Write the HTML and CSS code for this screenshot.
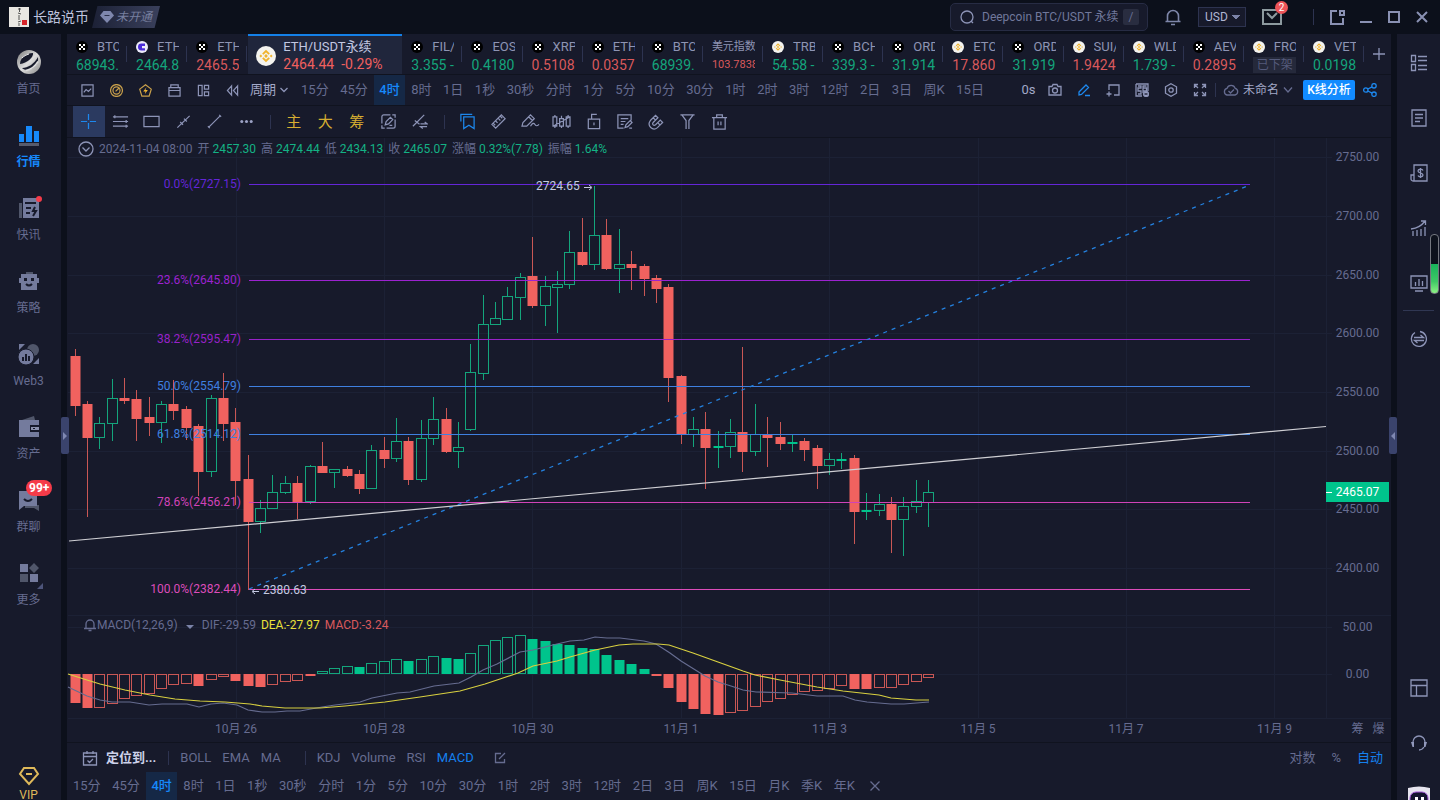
FILE: index.html
```html
<!DOCTYPE html>
<html lang="zh-CN">
<head>
<meta charset="utf-8">
<title>ETH/USDT永续</title>
<link rel="stylesheet" href="styles.css">
</head>
<body>
<svg class="defs" aria-hidden="true">
  <symbol id="okx" viewBox="0 0 12 12"><circle cx="6" cy="6" r="6" fill="#000"/><path d="M3 3h2v2H3zM7 3h2v2H7zM5 5h2v2H5zM3 7h2v2H3zM7 7h2v2H7z" fill="#fff"/></symbol>
  <symbol id="dc" viewBox="0 0 12 12"><circle cx="6" cy="6" r="6" fill="#ecebfa"/><path d="M9 2.600H5.400a3.400 3.400 0 1 0 0 6.800H9V7.200H6V5h3z" fill="#4a2bd8"/></symbol>
  <symbol id="bnb" viewBox="0 0 20 20"><circle cx="10" cy="10" r="10" fill="#f4f3ef"/><g fill="none" stroke="#f0b32d" stroke-width="1.8"><path d="M6.800 8.200 10 5l3.200 3.200M6.800 11.800 10 15l3.200-3.200"/></g><path d="m10 8.100 1.900 1.900L10 11.900 8.100 10zM4.800 8.600 6.200 10l-1.400 1.400L3.400 10zM15.200 8.600l1.400 1.400-1.400 1.400-1.400-1.400z" fill="#f0b32d"/></symbol>
</svg>

<div class="app">
  <header class="titlebar">
    <div class="account">
      <svg class="avatar" viewBox="0 0 20 20"><path fill="#e9e7e2" d="M0 0h20v20H0z"/><path d="M9 2h3M10.500 1v4M9 6l3 1M10 8v3M9 12h2M9 15l3-1M10 16v3" stroke="#444" stroke-width=".9"/><path fill="#d8262b" d="M13 13h5v5h-5z"/></svg>
      <span class="user">长路说币</span>
      <button class="vip-state"><svg viewBox="0 0 14 14" width="14" height="14"><path fill="#7e87ad" d="M3.500 1h7L14 5.500 7 13 0 5.500z"/><path stroke="#2b304a" d="M4.500 5.500h5"/></svg>未开通</button>
    </div>
    <div class="title-tools">
      <label class="search">
        <svg viewBox="0 0 16 16" width="16" height="16" class="ic"><circle cx="8" cy="8" r="6"/><path d="m12 12 2 2"/></svg>
        <input type="text" placeholder="Deepcoin BTC/USDT 永续" aria-label="搜索"><kbd>/</kbd>
      </label>
      <button class="bell" aria-label="通知"><svg class="ic" viewBox="0 0 18 18" width="18" height="18"><path d="M3.500 13V8a5.500 5.500 0 0 1 11 0v5M1.500 13.500h15M7 16.500h4"/></svg></button>
      <select class="currency" aria-label="计价货币"><option>USD</option></select>
      <button class="mail" aria-label="消息"><svg viewBox="0 0 20 16" width="20" height="16" fill="none" stroke="#8d9a9f" stroke-width="2"><path d="M1 1h18v14H1zM5 4l5 5 5-5"/></svg><span class="badge">2</span></button>
      <i class="vsep"></i>
      <div class="window-tools">
        <button aria-label="新窗口"><svg class="ic thick" viewBox="0 0 16 16" width="16" height="16"><path d="M8 2H2v13h12V9M11 2h4v4h-4z"/></svg></button>
        <button aria-label="最小化"><svg class="ic thick" viewBox="0 0 14 16" width="14" height="16"><path d="M1 13h12"/></svg></button>
        <button aria-label="最大化"><svg class="ic thick" viewBox="0 0 14 16" width="14" height="16"><path d="M2 3h10v10H2z"/></svg></button>
        <button aria-label="关闭"><svg class="ic thick" viewBox="0 0 14 16" width="14" height="16"><path d="m2 3 10 10M12 3 2 13"/></svg></button>
      </div>
    </div>
  </header>

  <div class="workspace">
    <nav class="sidebar">
      <a href="#"><svg viewBox="0 0 24 24"><defs><linearGradient id="metal" x2="1" y2="1"><stop stop-color="#777"/><stop offset=".5" stop-color="#ddd"/><stop offset="1" stop-color="#888"/></linearGradient></defs><circle cx="12" cy="12" r="12" fill="url(#metal)"/><path d="M3 14C3 8 9 3 16 3c1 4-6 10-13 11z" fill="#171a2b"/><path d="M5 18c6 0 12-4 16-11 1 7-4 12-10 13-3 0-5-1-6-2z" fill="#171a2b"/><path d="M9 20.500c5-1 9-4 12-9" stroke="#ddd" stroke-width="1.500" fill="none"/><path d="M5 8c2-2 4-3 7-4" stroke="#eee" fill="none"/></svg>首页</a>
      <a href="#" class="on"><svg viewBox="0 0 24 24"><path d="M2 11h5v8H2zM9 3h6v16H9zM17 8h5v11h-5z" fill="#1689fb"/><path d="M2 20h20v3H2z" fill="#575b6c"/></svg>行情</a>
      <a href="#"><svg viewBox="0 0 24 24"><path d="M2 7h3v15H2z" fill="#50566a"/><path d="M6 2h16v20H6z" fill="#747b9d"/><path d="M8 7h11M9 12h5M9 17h4M18 11l-2 4h3l-3 5" stroke="#171a2b" stroke-width="2" fill="none"/></svg><i class="dot"></i>快讯</a>
      <a href="#"><svg viewBox="0 0 24 24"><path d="M9 3h7v2H9z" fill="#50566a"/><path d="M4 5h16v4h2v5h-2v7H4v-7H2V9h2z" fill="#747b9d"/><path d="M7 9h3v3H7zM14 9h3v3h-3z" fill="#171a2b"/><path d="M9 15q3 3 6 0" stroke="#171a2b" stroke-width="2" fill="none"/></svg>策略</a>
      <a href="#"><svg viewBox="0 0 24 24"><circle cx="16" cy="8" r="6" fill="#50566a"/><circle cx="9" cy="15" r="8" fill="#747b9d" stroke="#171a2b"/><path d="M2 2h6L2 8zM22 22h-6l6-6z" fill="#747b9d"/><path d="M6 15v4M9 12v7M12 14v5" stroke="#171a2b" stroke-width="2"/></svg>Web3</a>
      <a href="#"><svg viewBox="0 0 24 24"><path d="m5 5 12-4 1 4z" fill="#50566a"/><path d="M2 5h20v17H2z" fill="#747b9d"/><path d="M13 10h9v7h-9z" fill="#171a2b"/><path d="M14 12h8v3h-8z" fill="#8b91ad"/><path d="M16 13h2v1h-2z" fill="#171a2b"/></svg>资产</a>
      <a href="#"><svg viewBox="0 0 24 24"><path d="M8 17h14v6l-5-3H8z" fill="#50566a"/><path d="M2 3h18v15H7l-5 4z" fill="#747b9d"/><path d="M7 11q4 4 8 0" stroke="#171a2b" stroke-width="2" fill="none"/></svg><span class="count">99+</span>群聊</a>
      <a href="#"><svg viewBox="0 0 24 24"><path d="M3 3h8v8H3zM13 13h8v8h-8z" fill="#747b9d"/><path d="M3 13h8v8H3zM17 2l5 5-5 5-5-5z" fill="#50566a"/></svg>更多<i class="corner"></i></a>
      <a href="#" class="vip"><svg viewBox="0 0 24 24" fill="none" stroke="#dfb95a" stroke-width="2"><path d="M7 4h10l4 6-9 10L3 10zM9 10h6"/></svg>VIP</a>
    </nav>

    <main class="main">
      <div class="tabs" id="tabs"></div>

      <div class="bar period-bar">
        <div class="tool-set">
          <button aria-label="图表"><svg class="ic" viewBox="0 0 14 14"><path d="M1 1h12v12H1zM3 9l2.500-3 2.500 2 3-3"/></svg></button>
          <button aria-label="时间"><svg class="ic gold" viewBox="0 0 14 14"><circle cx="7" cy="7" r="6.400"/><circle cx="7" cy="7" r="3.800"/><path d="m6 8 4-4"/></svg></button>
          <button aria-label="闪电"><svg class="ic gold" viewBox="0 0 14 14"><path d="m7 .8 6.200 4.700-2.300 7.500H3.100L.8 5.500z"/><path d="M8 3.500 4.500 8H7l-.8 3L9.500 6.500H7z" fill="#f2b632" stroke="none"/></svg></button>
          <button aria-label="工具箱"><svg class="ic" viewBox="0 0 14 14"><path d="M1 4h12v9H1zM3 4V1h8v3M1 7h12"/></svg></button>
          <button aria-label="布局"><svg class="ic" viewBox="0 0 14 14"><path d="M1.500 1.500h4v11h-4zM8 1.500h4.500v4H8zM8 8.500h4.500v4H8z"/></svg></button>
          <button aria-label="后退"><svg class="ic" viewBox="0 0 14 14"><path d="M6 2 1.500 7 6 12zM12.500 2 8 7l4.500 5z"/></svg></button>
        </div>
        <button class="period-menu">周期<svg class="ic" viewBox="0 0 8 6"><path d="m.5 1 3.500 3.500L7.500 1"/></svg></button>
        <div class="periods top" id="periodsTop"></div>
        <div class="chart-tools">
          <button class="zero">0s</button>
          <button aria-label="截图"><svg class="ic" viewBox="0 0 14 14"><path d="M1 3.500h3l1-2h4l1 2h3V12H1z"/><circle cx="7" cy="7.500" r="2.500"/></svg></button>
          <button aria-label="画图"><svg class="ic blue" viewBox="0 0 14 14"><path d="m2 9 7-7 2.500 2.500-7 7L2 12zM8 12.500h5"/></svg></button>
          <button aria-label="添加"><svg class="ic" viewBox="0 0 14 14"><path d="M3 7V2h10v10H8M3 8.500v5M.5 11h5"/></svg></button>
          <button aria-label="弹幕"><svg class="ic" viewBox="0 0 14 14"><path d="M1 1h12v7M7 13H1V1M3 3h3v2H3v3h3v3H3M8 3v7M7.500 5h4v3h-4M7.500 3h4"/><circle cx="11" cy="11" r="2.500" fill="#9ca3ca"/><path stroke="#171a2b" d="M9.500 11h3"/></svg></button>
          <button aria-label="设置"><svg class="ic" viewBox="0 0 14 14"><path d="m7 .7 5.500 3.100v6.400L7 13.300l-5.500-3.100V3.800z"/><circle cx="7" cy="7" r="2.200"/></svg></button>
          <button aria-label="全屏"><svg class="ic" viewBox="0 0 14 14"><path d="M1.500 5V1.500H5M2 2l3 3M9 1.500h3.500V5M12 2 9 5M1.500 9v3.500H5M2 12l3-3M9 12.500h3.500V9M12 12 9 9"/></svg></button>
        </div>
        <i class="vsep"></i>
        <button class="unnamed"><svg class="ic dim" viewBox="0 0 16 14" width="16" height="14"><path d="M4 12a3.400 3.400 0 0 1 0-6.600 4.300 4.300 0 0 1 8.200 0A3.400 3.400 0 0 1 12 12zM5.500 8l2 2 3.500-3.500"/></svg>未命名<svg class="ic dim" viewBox="0 0 10 6" width="10" height="6"><path d="m1 .5 4 4.500L9 .5"/></svg></button>
        <button class="analyse">K线分析</button>
        <button class="share" aria-label="分享"><svg class="ic blue" viewBox="0 0 14 14" width="14" height="14"><circle cx="2.800" cy="7" r="2.200"/><circle cx="11" cy="2.800" r="2.200"/><circle cx="11" cy="11.200" r="2.200"/><path d="m4.800 6 4.300-2.200M4.800 8l4.300 2.200"/></svg></button>
      </div>

      <div class="bar draw-bar">
        <div class="draw-tools">
          <button class="on" aria-label="十字线"><svg class="ic blue" viewBox="0 0 18 18"><path d="M9 1v6.500M9 10.500V17M1 9h6.500M10.500 9H17"/></svg></button>
          <button aria-label="水平线"><svg class="ic" viewBox="0 0 18 18"><path d="M1 4h16M1 9h16M1 14h16M3 2.500v3M15 7.500v3M15 12.500v3"/></svg></button>
          <button aria-label="矩形"><svg class="ic" viewBox="0 0 18 18"><path d="M1 3.500h16v11H1z"/></svg></button>
          <button aria-label="直线"><svg class="ic" viewBox="0 0 18 18"><path d="M2.500 15.500 15.500 3M5.500 9.500l3 3M9.500 6l3 3"/></svg></button>
          <button aria-label="线段"><svg class="ic" viewBox="0 0 18 18"><path d="M3 15 15 3M2 14l2 2M14 2l2 2"/></svg></button>
          <button aria-label="更多工具"><svg viewBox="0 0 18 18" fill="#9ba1c4"><circle cx="4" cy="9" r="1.600"/><circle cx="9" cy="9" r="1.600"/><circle cx="14" cy="9" r="1.600"/></svg></button>
          <i class="vsep"></i>
          <button class="gold-text">主</button><button class="gold-text">大</button><button class="gold-text">筹</button>
          <button aria-label="切换"><svg class="ic" viewBox="0 0 18 18"><path d="M11 2H4a2 2 0 0 0-2 2v7M7 16h7a2 2 0 0 0 2-2V7M13 2h3v3M2 13v3h3M5.500 12.500l1-3.500L11 4.500 13.500 7 9 11.500zM10 13h3"/></svg></button>
          <button aria-label="换线"><svg class="ic" viewBox="0 0 18 18"><path d="M2 14 14 2M4 8l5 4M10 11.500h7l-2.500-2M17 14.500h-7l2.500 2"/></svg></button>
          <i class="vsep"></i>
          <button aria-label="书签"><svg class="ic blue" viewBox="0 0 18 18"><path d="M5 4h11v12.500L10.500 13 5 16.500zM2 9V1.500h12"/></svg></button>
          <button aria-label="尺子"><svg class="ic" viewBox="0 0 18 18"><path d="M2 12 12 2l4 4L6 16zM6 8.500l2 2M9 6l2 2M3.500 11l2 2M11 3.500l2 2"/></svg></button>
          <button aria-label="画笔"><svg class="ic wide" viewBox="0 0 20 18"><path d="M1 14 2 10l8-8 4 4-8 8zM8 4l4 4M10 14q3-5 4.500-2t4.500 0"/></svg></button>
          <button aria-label="K线"><svg class="ic wide" viewBox="0 0 20 18"><path d="M1 4h4v10H1zM8 6h4v8H8zM15 4h4v10h-4zM3 2v2M3 14v2M10 3v3M10 14v2M17 2v2M17 14v2M1 14 19 4"/></svg></button>
          <button aria-label="锁定"><svg class="ic" viewBox="0 0 18 18"><path d="M3.500 6.500h12v10h-12zM7 6.500v-5h5.500M9.500 10v3"/></svg></button>
          <button aria-label="笔记"><svg class="ic" viewBox="0 0 18 18"><path d="M16 8V2H2v14h6M5 6h8M5 9h5M5 12h3M9.500 15.500l1-3L15 8l2 2-4.500 4.500zM14 16h3"/></svg></button>
          <button aria-label="磁铁"><svg class="ic" viewBox="0 0 18 18"><path d="M2.500 8 8 2.500 10.500 5 5.500 10c-1.500 2 .5 4 2.500 2.500l5-5 2.500 2.500-5.500 5.500c-5 4-11.500-2-7.500-7.500zM5.500 5 8 7.500M13 13l-2.500-2.500"/></svg></button>
          <button aria-label="筛选"><svg class="ic" viewBox="0 0 18 18"><path d="M1.500 2h15M3 2l4.500 6v9M15 2l-4.500 6v9"/></svg></button>
          <button aria-label="删除"><svg class="ic" viewBox="0 0 18 18"><path d="M1 5h16M6 5V2h6v3M3 5v12h12V5M7.500 9v4M10.500 9v4"/></svg></button>
        </div>
      </div>

      <section class="chart">
        <svg id="plot" viewBox="67 138 1324 604" role="img" aria-label="ETH/USDT 4时 K线图"></svg>
        <div class="quote">
          <svg class="ic" viewBox="0 0 16 16" width="16" height="16"><circle cx="8" cy="8" r="7"/><path d="m4.500 6.500 3.500 3.500 3.500-3.500"/></svg>
          <span>2024-11-04 08:00</span>
          <span>开 <b>2457.30</b></span><span>高 <b>2474.44</b></span><span>低 <b>2434.13</b></span><span>收 <b>2465.07</b></span><span>涨幅 <b>0.32%(7.78)</b></span><span>振幅 <b>1.64%</b></span>
        </div>
        <div class="legend">
          <svg class="ic dim" viewBox="0 0 14 14" width="14" height="14"><path d="M3 10V6a4 4 0 0 1 8 0v4M1 10.500h12M5.500 12.500h3"/></svg>
          <span>MACD(12,26,9)</span><i class="caret"></i><span>DIF:-29.59</span><span class="dea">DEA:-27.97</span><span class="red">MACD:-3.24</span>
        </div>
      </section>

      <div class="bar indicators">
        <button class="locate"><svg class="ic" viewBox="0 0 16 16" width="16" height="16"><path d="M1.500 3h13v12h-13zM1.500 6.500h13M5 1v3M11 1v3M5.500 10.500l2 2 3.500-3.500"/></svg>定位到...</button>
        <i class="vsep"></i>
        <div class="ind-group"><button>BOLL</button><button>EMA</button><button>MA</button></div>
        <i class="vsep"></i>
        <div class="ind-group"><button>KDJ</button><button>Volume</button><button>RSI</button><button class="blue">MACD</button></div>
        <button class="edit" aria-label="编辑指标"><svg class="ic dim" viewBox="0 0 12 12" width="12" height="12"><path d="M7 1.500H1.500v9h9V7M5 7l6-6"/></svg></button>
        <div class="scale"><button>对数</button><button>%</button><button class="blue">自动</button></div>
      </div>
      <div class="bar period-foot">
        <div class="periods foot" id="periodsFoot"></div>
        <button class="close" aria-label="关闭周期栏"><svg class="ic dim" viewBox="0 0 10 10" width="10" height="10"><path d="m.5.5 9 9M9.500.5l-9 9"/></svg></button>
      </div>
      <button class="handle left" aria-label="展开左栏"></button>
      <button class="handle right" aria-label="展开右栏"></button>
    </main>

    <aside class="rail">
      <button aria-label="列表"><svg class="ic" viewBox="0 0 18 18"><path d="M1.500 1.500h4v6h-4zM1.500 10.500h4v6h-4zM8 2.500h9M8 6.500h9M8 11.500h9M8 15.500h9"/></svg></button>
      <button aria-label="文档"><svg class="ic" viewBox="0 0 18 18"><path d="M2 1h14v16H2zM5 5.500h8M5 9h8M5 12.500h5"/></svg></button>
      <button aria-label="账单"><svg class="ic" viewBox="0 0 18 18"><path d="M4 1h13v16H3a2 2 0 0 1-2-2v-4h3zM4 11v6M13 6.500c-1-2-5-1.500-5 .5 0 2.500 5 1.500 5 4 0 2-4 2.500-5 .5M10.500 4v10"/></svg></button>
      <button aria-label="走势"><svg class="ic" viewBox="0 0 18 18"><path d="M3 17v-5M7 17v-6M11 17V10M15 17V8M1 10Q10 9 15 2M11 2h4.500v4"/></svg></button>
      <button aria-label="看板"><svg class="ic" viewBox="0 0 18 18"><path d="M1 2h16v12H1zM5 17h8M5.500 8v4M9 5v7M12.500 7v5"/></svg></button>
      <i class="hsep"></i>
      <button aria-label="兑换"><svg class="ic" viewBox="0 0 18 18"><path d="M5 2.500A7.500 7.500 0 1 0 10 1.500M4 7.500h9.500l-3-2.500M14 10.500H4.500l3 2.500"/></svg></button>
      <span class="grow"></span>
      <button aria-label="面板"><svg class="ic" viewBox="0 0 18 18"><path d="M1 1h16v16H1zM1 6.500h16M6.500 6.500V17"/></svg></button>
      <button aria-label="客服"><svg class="ic" viewBox="0 0 18 18"><path d="M3 10V8a6 6 0 0 1 12 0v2M14 13q-2 3-5 3"/><path d="M1 8h3v5H2.500zM17 8h-3v5h1.500z" fill="#9299bc" stroke="none"/></svg></button>
      <button class="bot" aria-label="助手"><svg viewBox="0 0 24 24"><path d="M1 2q11-3 22 0v16H1z" fill="#e6e4ee"/><rect x="3" y="6" width="18" height="14" rx="6" fill="#14152e" stroke="#a45bd8"/><path d="M8 11h3v5H8zM14 11h3v5h-3z" fill="#fff"/></svg></button>
      <span class="gauge"></span>
    </aside>
  </div>
</div>
<script src="app.js"></script>
</body>
</html>
```
FILE: styles.css
```css
* { box-sizing: border-box; }
body { margin: 0; background: #0c101b; color: #666c90; font: 13px/16px Roboto, "Noto Sans CJK SC", sans-serif; overflow: hidden; }
button, input, select { font: inherit; color: inherit; background: none; border: 0; padding: 0; margin: 0; }
button { display: flex; align-items: center; justify-content: center; white-space: nowrap; }
a { color: inherit; text-decoration: none; }
svg { display: block; flex: none; }
.defs { position: absolute; width: 0; height: 0; }
.ic { fill: none; stroke: #8d94b7; stroke-width: 1.3; }
.ic.thick { stroke: #8a91b3; stroke-width: 2; }
.ic.gold { stroke: #c9a04b; }
.ic.blue { stroke: #1d88ee; }
.ic.dim { stroke: #666c90; }
.blue { color: #1580ee; }
.red { color: #d9595c; }
.green { color: #14a57c; }
.vsep { width: 1px; height: 14px; background: #2d3350; flex: none; }

.app { min-height: 100vh; display: flex; flex-direction: column; }
.titlebar { height: 34px; display: flex; justify-content: space-between; align-items: center; padding: 0 11px 0 9px; }
.account { display: flex; align-items: center; }
.avatar { width: 20px; height: 20px; }
.user { margin-left: 4px; font-size: 14px; color: #bfc4de; }
.vip-state { height: 22px; margin-left: 3px; padding: 0 8px; gap: 2px; color: #777f9f; font-size: 12px; font-style: italic; background: linear-gradient(90deg, #1c2136, #3a405c); clip-path: polygon(8% 0, 100% 0, 92% 100%, 0 100%); }
.title-tools { display: flex; align-items: center; }
.search { display: flex; align-items: center; width: 198px; height: 28px; padding: 0 8px; border: 1px solid #272c44; border-radius: 5px; background: #171a2b; }
.search input { flex: 1; min-width: 0; margin-left: 7px; outline: 0; font-size: 12px; }
.search input::placeholder { color: #71789b; opacity: 1; }
.search kbd { width: 16px; height: 16px; border-radius: 2px; background: #292d40; text-align: center; font: 12px/16px Roboto, sans-serif; }
.bell { margin-left: 16px; }
.bell .ic { stroke-width: 1.6; stroke: #7e86a9; }
.currency { width: 48px; height: 20px; margin-left: 16px; padding-left: 6px; border: 1px solid #2d3350; color: #b0b6d2; font-size: 12px; appearance: none; background: linear-gradient(45deg, transparent 50%, #7b83a8 50%) 33px 7px / 4px 4px no-repeat, linear-gradient(315deg, transparent 50%, #7b83a8 50%) 37px 7px / 4px 4px no-repeat, #171a2b; }
.mail { position: relative; margin-left: 16px; }
.badge { position: absolute; top: -8px; right: -6px; width: 13px; height: 13px; border-radius: 50%; background: #ee5458; color: #fff; font-size: 10px; line-height: 13px; }
.title-tools > .vsep { margin: 0 15px 0 31px; height: 16px; }
.window-tools { display: flex; gap: 14px; }

.workspace { flex: 1; display: flex; gap: 6px; }
.sidebar { width: 61px; background: #171a2b; display: flex; flex-direction: column; font-size: 12px; padding-top: 16px; padding-right: 4px; }
.sidebar a { position: relative; height: 73px; display: flex; flex-direction: column; align-items: center; gap: 7px; }
.sidebar svg { width: 24px; height: 24px; }
.sidebar .on { color: #1689fb; font-weight: 700; }
.sidebar .vip { margin-top: auto; height: 36px; gap: 0; color: #dfb95a; line-height: 14px; }
.dot { position: absolute; top: 0; right: 15px; width: 6px; height: 6px; border-radius: 50%; background: #f53b49; }
.count { position: absolute; top: -8px; left: 26px; height: 16px; padding: 0 3px; border-radius: 8px; background: #f53b49; color: #fff; font-weight: 700; line-height: 16px; }
.corner { position: absolute; top: 22px; right: 14px; border: 3px solid; border-color: transparent #4d547a #4d547a transparent; }

.main { position: relative; flex: 1; min-width: 0; background: #171a2b; display: flex; flex-direction: column; }
.tabs { display: flex; height: 41px; border-bottom: 1px solid #10131f; }
.tab { position: relative; flex: 1; min-width: 0; height: 40px; display: grid; grid-template-columns: 21px minmax(0, 1fr); grid-template-rows: 18px 18px; padding: 4px 8px 0 9px; text-align: left; justify-content: stretch; color: #8e94b3; }
.tab > * { overflow: hidden; white-space: nowrap; }
.tab svg { width: 12px; height: 12px; }
.tab .price { grid-column: 1 / 3; font-size: 14px; line-height: 18px; }
.tab .name { line-height: 16px; }
.tab.index .name { grid-column: 1 / 3; font-size: 11px; line-height: 14px; }
.tab.index .price { font-size: 11px; line-height: 14px; }
.tab .off { grid-column: 1 / 3; width: 43px; height: 16px; padding: 0 4px; background: #25293b; color: #555b7c; line-height: 16px; font-size: 12px; }
.tab::after { content: ""; position: absolute; right: 0; top: 12px; width: 1px; height: 16px; background: #2d3350; }
.tab.on { flex: none; width: 154px; margin-left: 1px; grid-template-columns: 27px 1fr; grid-template-rows: 17px 18px; border-top: 2px solid #1480e8; background: #20263c; padding: 2px 8px 0; color: #c3c8e2; }
.tab.on svg { grid-row: 1 / 3; width: 20px; height: 20px; }
.tab.on .price { grid-column: 2; color: #f0605f; }
.tab.on::after { display: none; }
.add { width: 27px; padding-left: 3px; }

.bar { display: flex; align-items: center; }
.period-bar { height: 31px; border-bottom: 1px solid #10131f; padding-left: 6px; padding-right: 14px; }
.tool-set { display: flex; }
.tool-set button { width: 29px; height: 28px; }
.tool-set svg { width: 13px; height: 13px; }
.period-menu { margin-left: 3px; gap: 4px; color: #a3a9c8; }
.period-menu svg { width: 8px; height: 6px; }
.periods { display: flex; justify-content: space-between; }
.periods button { height: 30px; padding: 0 5px; }
.periods .on { color: #1689fb; background: #152846; font-weight: 500; }
.periods.top { width: 693px; margin-left: 8px; }
.chart-tools { display: flex; margin-left: auto; }
.chart-tools button { width: 29px; }
.chart-tools .zero { width: 25px; color: #a3a9c8; }
.chart-tools svg { width: 14px; height: 14px; }
.unnamed { margin: 0 10px 0 7px; gap: 4px; font-size: 12px; color: #a3a9c8; }
.analyse { width: 52px; height: 20px; border-radius: 2px; background: #128bff; color: #fff; font-size: 12px; font-weight: 500; }
.share { margin-left: 8px; }

.draw-bar { height: 32px; border-bottom: 1px solid #10131f; padding: 0 6px; }
.draw-tools { display: flex; align-items: center; width: 662px; }
.draw-tools button { flex: 1; height: 31px; }
.draw-tools svg { width: 17px; height: 17px; }
.draw-tools svg.wide { width: 19px; }
.draw-tools .on { background: #2b3a60; }
.draw-tools .vsep { margin: 0 7px 0 8px; }
.gold-text { color: #d6ae31; font-size: 15px; }

.chart { position: relative; }
#plot { width: 100%; height: auto; font-size: 12px; fill: #666c90; }
.quote { position: absolute; left: 11px; top: 3px; display: flex; align-items: center; gap: 5px; font-size: 12px; }
.quote b { font-weight: 400; color: #14b285; }
.legend { position: absolute; left: 16px; top: 480px; display: flex; align-items: center; gap: 5px; font-size: 12px; line-height: 14px; }
.legend svg { margin-right: -5px; }
.legend .dea { color: #e9e13b; }
.caret { margin: 3px 3px 0; border: 4px solid transparent; border-top-color: #7b83a8; border-bottom: 0; }
.grid path { stroke: #1c2135; }
.axis { text-anchor: middle; }

.indicators { height: 30px; border-top: 1px solid #10131f; padding: 0 8px 0 15px; }
.locate { gap: 8px; color: #cdd2ea; font-weight: 700; }
.indicators > .vsep { margin: 0 11px 0 12px; }
.ind-group { display: flex; gap: 11px; }
.ind-group + .vsep { margin-left: 24px; }
.edit { margin-left: 20px; }
.scale { display: flex; gap: 16px; margin-left: auto; }
.period-foot { height: 28px; padding-left: 1px; }
.period-foot .periods { width: 792px; }
.period-foot .periods button { height: 28px; }
.period-foot .close { margin-left: 10px; }
.handle { position: absolute; top: 383px; width: 8px; height: 37px; border-radius: 2px; background: #3a436c; }
.handle::after { content: ""; border: 4px solid transparent; border-left-color: #7f88b2; border-right: 0; }
.handle.left { left: -6px; }
.handle.right { right: -6px; }
.handle.right::after { border: 4px solid transparent; border-right-color: #7f88b2; border-left: 0; }

.rail { position: relative; width: 43px; background: #171a2b; display: flex; flex-direction: column; align-items: center; padding-top: 1px; overflow: hidden; }
.rail button { width: 43px; height: 55px; }
.rail svg { width: 18px; height: 18px; }
.rail .bot svg { width: 24px; height: 24px; }
.rail .bot { margin-bottom: -25px; }
.hsep { width: 31px; height: 1px; background: #303753; }
.grow { flex: 1; }
.gauge { position: absolute; top: 200px; right: 1px; width: 9px; height: 60px; border: 1px solid #74777f; border-radius: 4px; background: linear-gradient(#0d111c 50%, #18b35b 50%, #3fc866 80%, #8cf284); }
```
FILE: app.js
```js
const tabs = [
  ['okx', 'BTC/USDT', '68943.9', 'green'], ['dc', 'ETH/USDT', '2464.8', 'green'], ['okx', 'ETH/USDT', '2465.5', 'red'],
  ['bnb', 'ETH/USDT永续', '2464.44 \u00a0-0.29%', 'on'],
  ['okx', 'FIL/USDT', '3.355 -', 'green'], ['okx', 'EOS/USDT', '0.4180', 'green'], ['okx', 'XRP/USDT', '0.5108', 'red'],
  ['okx', 'ETH/BTC', '0.0357', 'red'], ['okx', 'BTC/USDT', '68939.', 'green'], ['', '美元指数', '103.7838', 'red'],
  ['bnb', 'TRB/USDT', '54.58 -', 'green'], ['okx', 'BCH/USDT', '339.3 -', 'green'], ['okx', 'ORDI', '31.914', 'green'],
  ['bnb', 'ETC/USDT', '17.860', 'red'], ['okx', 'ORDI', '31.919', 'green'], ['bnb', 'SUI/USDT', '1.9424', 'red'],
  ['bnb', 'WLD/USDT', '1.739 -', 'green'], ['okx', 'AEVO', '0.2895', 'red'], ['bnb', 'FRONT', '', 'off'], ['bnb', 'VET/USDT', '0.01984', 'green']
];
document.getElementById('tabs').innerHTML = tabs.map(([icon, name, price, tone]) => {
  const pic = icon ? `<svg><use href="#${icon}"/></svg>` : '';
  const value = tone === 'off' ? '<span class="off">已下架</span>' : `<span class="price ${tone === 'on' ? '' : tone}">${price}</span>`;
  return `<button class="tab ${tone === 'on' ? 'on' : ''} ${icon ? '' : 'index'}">${pic}<span class="name">${name}</span>${value}</button>`;
}).join('') + '<button class="add" aria-label="添加"><svg class="ic" viewBox="0 0 14 14" width="14" height="14"><path d="M7 1v12M1 7h12"/></svg></button>';

const common = '15分 45分 4时 8时 1日 1秒 30秒 分时 1分 5分 10分 30分 1时 2时 3时 12时 2日 3日 周K 15日';
const fill = (id, list) => {
  document.getElementById(id).innerHTML = list.split(' ').map(p => `<button class="${p === '4时' ? 'on' : ''}">${p}</button>`).join('');
};
fill('periodsTop', common);
fill('periodsFoot', common + ' 月K 季K 年K');

/* high, body top, body bottom, low, up (1) or down (0) */
const candles = [
[349,356,405,416,0],[401,404,437,517,0],[417,423,437,449,1],[379,398,423,441,1],[378,398,400,404,0],[390,399,418,441,0],[397,417,422,436,0],[401,404,422,443,1],[380,404,410,420,0],[406,409,427,440,0],
[424,426,471,496,0],[395,398,471,477,1],[373,398,423,441,0],[408,422,480,505,0],[455,479,521,590,0],[500,508,521,533,1],[475,492,508,508,1],[476,483,492,494,1],[476,483,502,519,0],[465,466,501,504,1],
[442,466,472,472,0],[469,469,472,488,1],[466,469,475,477,0],[470,474,488,494,0],[445,450,488,488,1],[437,450,458,468,0],[418,441,458,462,1],[437,441,479,485,0],[420,438,479,482,1],[397,419,438,445,1],
[408,419,451,453,0],[422,447,451,468,1],[344,372,429,431,1],[295,324,373,380,1],[302,318,324,324,1],[287,296,319,319,1],[273,277,297,320,1],[237,276,305,308,0],[276,286,305,326,1],[271,284,287,333,1],
[231,252,284,289,1],[218,252,264,266,0],[186,235,264,270,1],[219,235,268,270,0],[229,264,268,293,1],[251,264,267,290,0],[264,266,278,296,0],[275,278,288,303,0],[284,287,377,402,0],[375,376,434,444,0],
[417,429,434,447,1],[412,429,447,489,0],[431,446,447,468,1],[419,432,446,458,1],[347,432,451,472,0],[404,434,451,456,1],[417,434,437,467,0],[422,437,443,450,0],[434,442,443,452,1],[438,441,449,461,0],
[445,448,465,489,0],[453,459,465,475,1],[453,459,460,469,1],[455,458,511,544,0],[493,510,511,520,1],[494,504,510,516,1],[497,504,519,553,0],[497,506,519,556,1],[480,501,506,513,1],[480,492,502,527,1]];

/* far edge of each histogram bar; a trailing 1 marks a solid bar */
const macd = [[702,1],[707,1],[707],[703],[698],[695],[693],[688],[684],[683],[685,1],[679],[676],[680,1],[685,1],[686,1],[684],[681],[680],[675,1],
[671],[668],[666],[667,1],[663],[661],[659],[661,1],[659],[656],[658,1],[659,1],[653],[645],[640],[637],[635],[639,1],[641,1],[644,1],[645,1],[648,1],[649,1],[655,1],[660,1],[664,1],[669,1],
[675,1],[687,1],[701,1],[708,1],[713,1],[714,1],[712],[710],[706],[701],[698],[694],[691],[690],[688],[685],[688,1],[688,1],[687],[687],[684],[681],[677]];

const UP = '#00c48c', UP_LINE = '#14a57c', DOWN = '#f0625f', DOWN_LINE = '#c95755';
const cx = i => Math.round(74.5 + i * 12.37);
const line = (x1, y1, x2, y2, c, extra = '') => `<path d="M${x1} ${y1}L${x2} ${y2}" stroke="${c}" fill="none" ${extra}/>`;
const text = (x, y, s, extra = '') => `<text x="${x}" y="${y}" ${extra}>${s}</text>`;
let out = '<g class="grid">';
[157, 216, 275, 333, 392, 451, 509, 568, 627, 674].forEach(y => out += line(68, y + .5, 1332, y + .5, ''));
[615, 718].forEach(y => out += line(68, y + .5, 1391, y + .5, ''));
[236, 384, 532, 681, 829, 978, 1126, 1274, 1326].forEach(x => out += line(x + .5, 138, x + .5, 718, ''));
out += '</g>';

candles.forEach(([h, t, b, l, up], i) => {
  const x = cx(i) + .5;
  const c = up ? UP_LINE : DOWN_LINE;
  out += line(x, h, x, t, c) + line(x, b, x, l, c);
  if (!up) out += `<rect x="${x - 5}" y="${t}" width="10" height="${b - t + 1}" fill="${DOWN}"/>`;
  else if (b - t < 2) out += `<rect x="${x - 5}" y="${t}" width="10" height="2" fill="${UP}"/>`;
  else out += `<rect x="${x - 5}" y="${t + .5}" width="10" height="${b - t}" fill="none" stroke="${UP_LINE}"/>`;
});

macd.forEach(([y, solid], i) => {
  const x = cx(i) + .5, up = y < 674;
  const top = up ? y : 674, h = Math.abs(y - 674);
  if (solid) out += `<rect x="${x - 5}" y="${top}" width="10" height="${up ? h : h + 1}" fill="${up ? UP : DOWN}"/>`;
  else out += `<rect x="${x - 5}" y="${top + .5}" width="10" height="${up ? h - 1 : h}" fill="none" stroke="${up ? UP_LINE : DOWN_LINE}"/>`;
});

const curve = (pts, c) => `<polyline points="${pts}" fill="none" stroke="${c}" stroke-width="1.2"/>`;
out += curve('68,687 87,696 100,700 112,702 130,702 149,705 162,704 187,704 199,707 211,704 223,703 237,705 248,710 262,712 275,712 287,711 300,711 322,707 335,705 360,702 372,698 397,693 410,692 434,686 459,683 471,677 483,670 497,664 520,652 533,650 557,644 570,641 584,640 595,637 607,638 620,638 644,641 656,644 670,653 681,661 705,676 718,682 731,686 743,690 756,692 792,693 817,696 843,696 855,700 867,702 891,704 904,704 929,702', '#666c90');
out += curve('68,674 87,680 100,684 125,690 150,695 175,699 200,701 225,702 250,704 262,706 285,708 320,708 345,706 385,702 420,697 460,691 485,684 500,679 518,673 533,666 557,661 570,657 595,650 619,645 633,644 658,644 669,645 693,653 718,662 743,671 755,675 780,680 817,687 843,691 879,695 891,698 916,700 929,700', '#d8d040');

[['0.0%(2727.15)', 184, '#6426d8'], ['23.6%(2645.80)', 280, '#9c22d0'], ['38.2%(2595.47)', 339, '#9822c8'], ['50.0%(2554.79)', 386, '#3f80e0'],
 ['61.8%(2514.12)', 434, '#3f80e0'], ['78.6%(2456.21)', 502, '#d043b8'], ['100.0%(2382.44)', 589, '#dc4cba']].forEach(([s, y, c]) => {
  out += line(249, y + .5, 1250, y + .5, c) + text(241, y + 4, s, `text-anchor="end" fill="${c}"`);
});
out += line(249, 589, 1250, 185, '#2480de', 'stroke-width="1.3" stroke-dasharray="4 5"');
out += line(69, 541, 1326, 426.5, '#cfcfd4', 'stroke-width="1.2"');
out += text(536, 190, '2724.65', 'fill="#c5cae2"') + line(584, 187.5, 591, 187.5, '#c5cae2') + '<path d="m589 185 3 2.500-3 2.500" stroke="#c5cae2" fill="none"/>';
out += text(263, 594, '2380.63', 'fill="#c5cae2"') + line(253, 591.5, 259, 591.5, '#c5cae2') + '<path d="m255 589-3 2.500 3 2.500" stroke="#c5cae2" fill="none"/>';

out += '<g class="axis">';
[['2750.00', 157], ['2700.00', 216], ['2650.00', 275], ['2600.00', 333], ['2550.00', 392], ['2500.00', 451], ['2450.00', 509], ['2400.00', 568], ['50.00', 627], ['0.00', 674]].forEach(([s, y]) => out += text(1357.5, y + 4, s));
[['10月 26', 236], ['10月 28', 384], ['10月 30', 532.5], ['11月 1', 681], ['11月 3', 829.5], ['11月 5', 978], ['11月 7', 1126], ['11月 9', 1274.5], ['筹', 1357.5], ['爆', 1378.5]].forEach(([s, x]) => out += text(x, 733, s, 'font-size="12"'));
out += '<rect x="1326" y="482" width="63" height="20" fill="#00c48c"/><path d="M1326 492.500h6" stroke="#fff"/>' + text(1357.5, 496, '2465.07', 'fill="#fff"');
out += '</g>';
document.getElementById('plot').innerHTML = out;
```
